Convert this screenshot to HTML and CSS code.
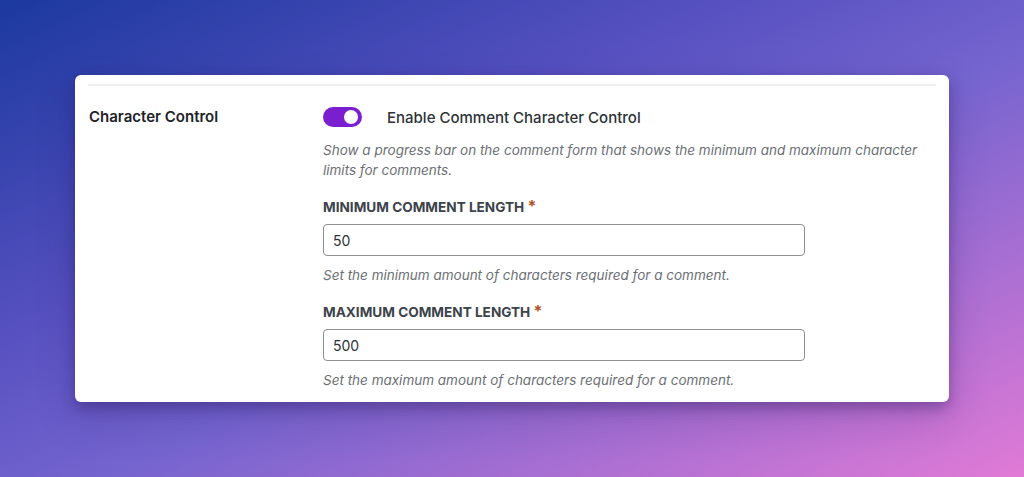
FILE: index.html
```html
<!DOCTYPE html>
<html lang="en">
<head>
<meta charset="utf-8">
<title>Character Control</title>
<link rel="stylesheet" href="styles.css">
</head>
<body>
<main class="stage">
  <section class="card">
    <div class="row">
      <div class="row-label">Character Control</div>
      <div class="row-body">
        <label class="switch-line">
          <span class="switch"><span class="knob"></span></span>
          <span class="switch-text">Enable Comment Character Control</span>
        </label>
        <p class="desc">Show a progress bar on the comment form that shows the minimum and maximum character limits for comments.</p>

        <div class="field">
          <div class="field-label">Minimum Comment Length <span class="req">*</span></div>
          <input class="field-input" type="text" value="50">
          <p class="help">Set the minimum amount of characters required for a comment.</p>
        </div>

        <div class="field">
          <div class="field-label">Maximum Comment Length <span class="req">*</span></div>
          <input class="field-input" type="text" value="500">
          <p class="help">Set the maximum amount of characters required for a comment.</p>
        </div>
      </div>
    </div>
  </section>
</main>
</body>
</html>
```

FILE: styles.css
```css
html, body {
  margin: 0;
  padding: 0;
}

body {
  width: 1024px;
  height: 477px;
  overflow: hidden;
  font-family: Inter, "Noto Sans", "Liberation Sans", sans-serif;
  background: linear-gradient(to bottom right, #1b399e 0%, #5650c0 35%, #7464cf 55%, #e17ad6 100%);
}

.stage {
  padding: 75px 75px 0 75px;
}

.card {
  width: 874px;
  box-sizing: border-box;
  background: #ffffff;
  border-radius: 6px;
  padding: 9px 13px 12px 13px;
  box-shadow: 0 6px 14px rgba(40, 20, 90, 0.35), 0 16px 40px rgba(40, 20, 90, 0.18);
}

.row {
  display: flex;
  border-top: 2px solid #f0f0f1;
  padding-top: 21px;
}

.row-label {
  width: 234px;
  flex: none;
  padding-left: 1px;
  font-size: 15px;
  line-height: 20px;
  font-weight: 600;
  color: #1d2327;
}

.row-body {
  flex: 1;
}

.switch-line {
  display: flex;
  align-items: center;
  gap: 25px;
  height: 20px;
}

.switch {
  position: relative;
  width: 39px;
  height: 20px;
  border-radius: 10px;
  background: #7a1fcf;
  flex: none;
}

.knob {
  position: absolute;
  top: 3px;
  right: 4px;
  width: 14px;
  height: 14px;
  border-radius: 50%;
  background: #ffffff;
}

.switch-text {
  font-size: 15px;
  font-weight: 500;
  color: #2c3338;
}

.desc {
  margin: 13px 0 0 0;
  max-width: 610px;
  font-size: 13.5px;
  line-height: 20px;
  font-style: italic;
  color: #6b6f75;
}

.field-label {
  margin-top: 18px;
  height: 18px;
  font-size: 13.6px;
  line-height: 18px;
  font-weight: 700;
  text-transform: uppercase;
  color: #3c434a;
}

.req {
  color: #b5501e;
  font-size: 16px;
  line-height: 0;
  font-weight: 700;
}

.field-input {
  display: block;
  margin-top: 8px;
  width: 482px;
  height: 32px;
  box-sizing: border-box;
  border: 1px solid #8c8f94;
  border-radius: 4px;
  padding: 0 9px;
  font-family: inherit;
  font-size: 14px;
  color: #2c3338;
  background: #ffffff;
  outline: none;
}

.help {
  margin: 9px 0 0 0;
  font-size: 13.5px;
  line-height: 20px;
  font-style: italic;
  color: #6b6f75;
}
```
